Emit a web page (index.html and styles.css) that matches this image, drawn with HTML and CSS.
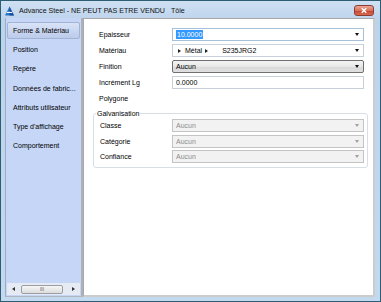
FILE: index.html
```html
<!DOCTYPE html>
<html lang="fr">
    <head>
        <meta charset="UTF-8">
        <title>Advance Steel - Tôle</title>
        <link rel="stylesheet" href="styles.css">
    </head>
    <body>
        <div class="window">
            <div class="titlebar">
                <svg class="app-icon" viewBox="0 0 10 10" width="9" height="10">
                    <polygon points="5,0 10,10 0,10" fill="#2b74c9"/>
                    <polygon points="5,0 10,10 5,10" fill="#1b4f9a"/>
                    <rect x="2" y="6" width="6" height="1.2" fill="#ffffff"/>
                </svg>
                <span class="title">Advance Steel - NE PEUT PAS ETRE VENDU</span>
                <span class="title doc">Tôle</span>
                <button class="close">
                    <svg viewBox="0 0 20 11" width="20" height="11">
                        <path d="M7.5 3 L12.5 8 M12.5 3 L7.5 8" stroke="#ffffff" stroke-width="1.6"/>
                    </svg>
                </button>
            </div>

            <div class="client">
                <div class="sidebar">
                    <ul class="nav">
                        <li class="active">Forme &amp; Matériau</li>
                        <li>Position</li>
                        <li>Repère</li>
                        <li>Données de fabric...</li>
                        <li>Attributs utilisateur</li>
                        <li>Type d'affichage</li>
                        <li>Comportement</li>
                    </ul>
                    <div class="hscroll">
                        <span class="arrow-left"></span>
                        <span class="thumb">III</span>
                        <span class="arrow-right"></span>
                    </div>
                </div>

                <div class="content">
                    <div class="form">
                        <label>Epaisseur</label>
                        <div class="combo focus"><span class="selected">10.0000</span><i class="caret"></i></div>

                        <label>Matériau</label>
                        <div class="combo">
                            <i class="tri"></i><span class="mat">Métal</span>
                            <i class="tri"></i><span class="grade">S235JRG2</span>
                            <i class="caret"></i>
                        </div>

                        <label>Finition</label>
                        <div class="combo button-like">Aucun<i class="caret"></i></div>

                        <label>Incrément Lg</label>
                        <div class="combo">0.0000</div>

                        <label>Polygone</label>
                        <div></div>
                    </div>

                    <fieldset class="group">
                        <legend>Galvanisation</legend>
                        <div class="form group-form">
                            <label>Classe</label>
                            <div class="combo disabled">Aucun<i class="caret"></i></div>

                            <label>Catégorie</label>
                            <div class="combo disabled">Aucun<i class="caret"></i></div>

                            <label>Confiance</label>
                            <div class="combo disabled">Aucun<i class="caret"></i></div>
                        </div>
                    </fieldset>
                </div>
            </div>
        </div>
    </body>
</html>
```

FILE: styles.css
```css
* {
    box-sizing: border-box;
}
body {
    margin: 0;
    font-family: "Liberation Sans", Arial, sans-serif;
    font-size: 7px;
    color: #000;
}
.window {
    width: 381px;
    height: 302px;
    border: 1px solid #2c5d73;
    background: linear-gradient(#cfe0f3, #bcd3ec 20px, #c3d9f0);
    display: flex;
    flex-direction: column;
    padding: 0 5px 4px 4px;
}
.titlebar {
    height: 17px;
    display: flex;
    align-items: center;
    padding-top: 2px;
}
.app-icon {
    margin-right: 5px;
}
.title {
    font-size: 7.1px;
    color: #111;
}
.title.doc {
    margin-left: 6px;
}
.close {
    margin-left: auto;
    margin-right: 1px;
    width: 20px;
    height: 11px;
    padding: 0;
    border: 1px solid #8b3b2f;
    border-radius: 3px;
    background: linear-gradient(#eba897, #d7705c 50%, #c5432f 51%, #d46b4f);
    display: flex;
    align-items: center;
    justify-content: center;
}
.close svg {
    display: block;
}
.client {
    flex: 1;
    display: flex;
}
.sidebar {
    width: 78px;
    background: #c6d6f7;
    border-left: 1px solid #9eabc4;
    border-right: 2px solid #adb2ba;
    border-bottom: 1px solid #b0b6c0;
    display: flex;
    flex-direction: column;
}
.nav {
    list-style: none;
    margin: 0;
    padding: 4px 1px 0 1px;
    flex: 1;
}
.nav li {
    height: 17px;
    line-height: 15px;
    margin-bottom: 2.2px;
    padding-left: 5px;
    border: 1px solid transparent;
    white-space: nowrap;
}
.nav li.active {
    background: linear-gradient(#d9e3f7, #bccbeb);
    border-color: #a3b3d6;
    border-radius: 2px;
}
.hscroll {
    height: 12px;
    margin: 0 1px 1px 1px;
    background: #e6eaf3;
    display: flex;
    align-items: center;
    padding: 0 3px;
}
.arrow-left {
    border-top: 2px solid transparent;
    border-bottom: 2px solid transparent;
    border-right: 3px solid #333;
    margin-left: 2px;
}
.arrow-right {
    border-top: 2px solid transparent;
    border-bottom: 2px solid transparent;
    border-left: 3px solid #333;
    margin-left: auto;
    margin-right: 2px;
}
.thumb {
    width: 42px;
    height: 9px;
    margin-left: 6px;
    border: 1px solid #9a9ea6;
    border-radius: 2px;
    background: linear-gradient(#f6f6f6, #dcdcdc);
    font-size: 5px;
    line-height: 7px;
    text-align: center;
    color: #555;
}
.content {
    flex: 1;
    background: #fff;
    border: 1px solid #a8a8a8;
    border-right: 2px solid #cccccc;
    border-bottom: 2px solid #cccccc;
    padding: 9px 0 0 15px;
}
.form {
    display: grid;
    grid-template-columns: 73px 192px;
    grid-auto-rows: 13px;
    row-gap: 3px;
    align-items: center;
}
.combo {
    height: 13px;
    border: 1px solid #c8d1db;
    background: #fff;
    display: flex;
    align-items: center;
    padding: 0 4px 0 3px;
    white-space: nowrap;
}
.combo.focus {
    border-color: #a7c0da;
}
.selected {
    background: #3399ff;
    color: #fff;
    padding: 0 1px;
    line-height: 9px;
}
.caret {
    margin-left: auto;
    border-left: 2.5px solid transparent;
    border-right: 2.5px solid transparent;
    border-top: 3px solid #111;
}
.tri {
    border-top: 2.5px solid transparent;
    border-bottom: 2.5px solid transparent;
    border-left: 3px solid #222;
    margin: 0 4px 0 2px;
}
.mat {
    margin-right: 1px;
}
.grade {
    margin-left: 10px;
}
.button-like {
    border-color: #6f6f6f;
    border-radius: 2px;
    background: linear-gradient(#f4f4f4, #e8e8e8 50%, #d9d9d9 51%, #e0e0e0);
}
.disabled {
    border-color: #c4c4c4;
    background: #f2f2f2;
    color: #8c8c8c;
}
.disabled .caret {
    border-top-color: #a0a0a0;
}
.group {
    width: 275px;
    margin: 4px 0 0 -6px;
    border: 1px solid #d6dee6;
    border-radius: 3px;
    padding: 0 0 4px 6px;
}
.group legend {
    padding: 0 1px;
    margin-left: -4px;
    line-height: 9px;
}
.group-form {
    grid-template-columns: 72px 192px;
    row-gap: 2.5px;
    margin-top: 1px;
}
```
